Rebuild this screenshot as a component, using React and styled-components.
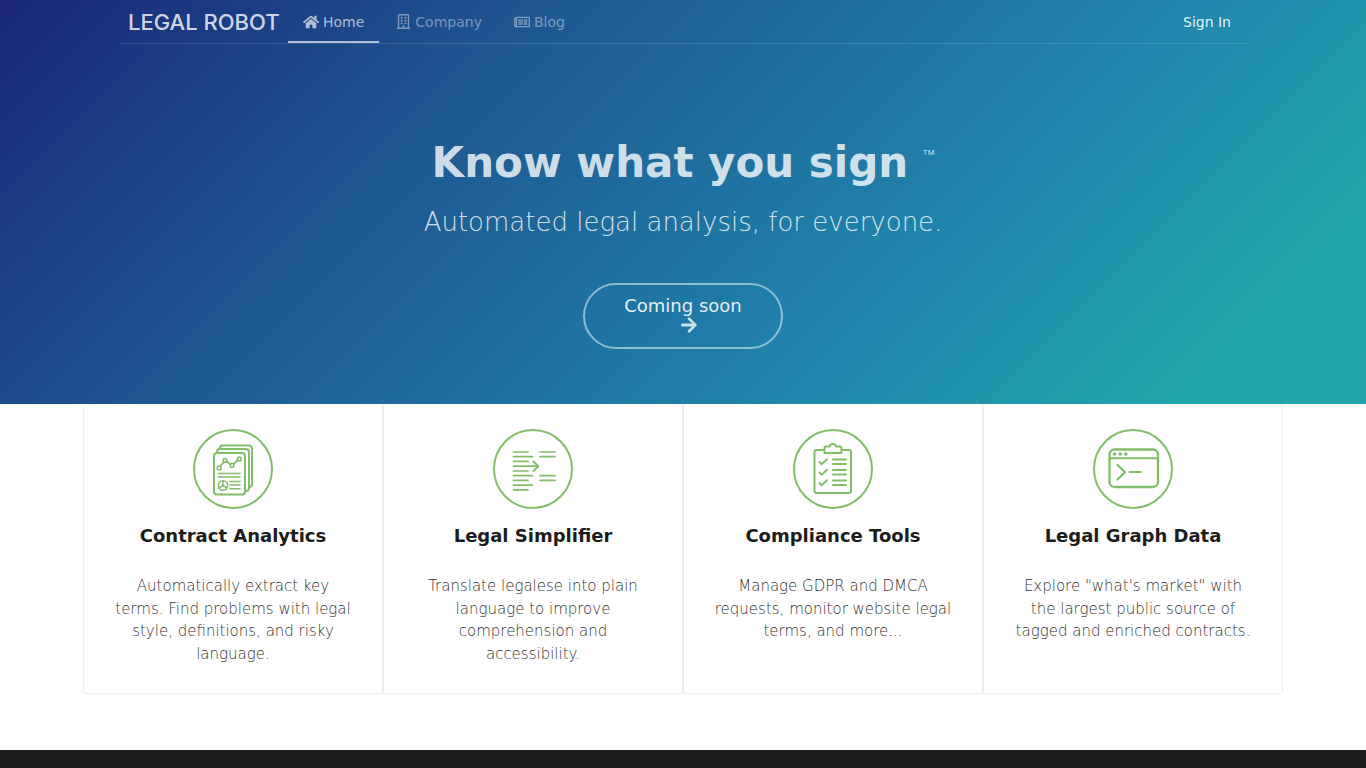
import React from 'react';
import styled, { createGlobalStyle } from 'styled-components';
import { FaHome, FaRegBuilding, FaRegNewspaper, FaArrowRight } from 'react-icons/fa';

const features = [
    {
        title: 'Contract Analytics',
        text: 'Automatically extract key terms. Find problems with legal style, definitions, and risky language.',
        Icon: AnalyticsIcon,
    },
    {
        title: 'Legal Simplifier',
        text: 'Translate legalese into plain language to improve comprehension and accessibility.',
        Icon: SimplifierIcon,
    },
    {
        title: 'Compliance Tools',
        text: 'Manage GDPR and DMCA requests, monitor website legal terms, and more...',
        Icon: ComplianceIcon,
    },
    {
        title: 'Legal Graph Data',
        text: 'Explore "what\'s market" with the largest public source of tagged and enriched contracts.',
        Icon: GraphIcon,
    },
];

export default function App() {
    return (
        <>
            <GlobalStyle />
            <Hero>
                <Navbar>
                    <Logo href="#">LEGAL ROBOT</Logo>
                    <NavLink href="#" $active><FaHome size={16} />Home</NavLink>
                    <NavLink href="#"><FaRegBuilding size={15} />Company</NavLink>
                    <NavLink href="#"><FaRegNewspaper size={16} />Blog</NavLink>
                    <SignIn href="#">Sign In</SignIn>
                </Navbar>
                <Intro>
                    <Title>Know what you sign <Mark>TM</Mark></Title>
                    <Subtitle>Automated legal analysis, for everyone.</Subtitle>
                    <SoonButton type="button">
                        Coming soon
                        <FaArrowRight size={18} />
                    </SoonButton>
                </Intro>
            </Hero>
            <Features>
                {features.map(({ title, text, Icon }) => (
                    <Card key={title}>
                        <Icon />
                        <CardTitle>{title}</CardTitle>
                        <CardText>{text}</CardText>
                    </Card>
                ))}
            </Features>
            <Footer />
        </>
    );
}

function AnalyticsIcon() {
    return (
        <Badge viewBox="0 0 80 80">
            <circle cx="40" cy="40" r="39" />
            <path d="M27 20v-1a2.500 2.500 0 0 1 2.500-2.500H56a3 3 0 0 1 3 3V55a3 3 0 0 1-3 3" />
            <path d="M24 24v-1a3 3 0 0 1 3-3h26a3 3 0 0 1 3 3v36a3 3 0 0 1-3 3" />
            <rect x="21" y="24" width="31" height="41.500" rx="3" />
            <path d="M27.200 37.200l3.800-4.500M33.500 32.300l4 3.200M40.500 35l4.400-4" strokeWidth="1.700" />
            <g strokeWidth="1.500">
                <circle cx="26.200" cy="39" r="1.900" />
                <circle cx="32" cy="31.500" r="1.900" />
                <circle cx="39" cy="36.500" r="1.900" />
                <circle cx="46.300" cy="30" r="1.900" />
            </g>
            <path d="M25.500 44.500H47M25.500 48H47M37 52.500h10M37 56h10M37 59.800h10" strokeWidth="1.600" />
            <circle cx="30" cy="56.500" r="4.700" strokeWidth="1.600" />
            <path d="M30 52v4.500l4 2.300M30 56.500l-4 2.300" strokeWidth="1.500" />
        </Badge>
    );
}

function SimplifierIcon() {
    return (
        <Badge viewBox="0 0 80 80">
            <circle cx="40" cy="40" r="39" />
            <path
                d="M20.500 23h14.500M20.500 27.700h19M20.500 32.400h14.500M20.500 37.200h24.500M20.500 42h14.500M20.500 46.700h19M20.500 51.400h14.500M20.500 56.100h19M20.500 60.800h14.500M47 23h15M47 27.700h15M47 46.700h15M47 51.400h15"
                strokeWidth="1.700"
            />
            <path d="M40.500 32.500l4.800 4.700-4.800 4.800" />
        </Badge>
    );
}

function ComplianceIcon() {
    return (
        <Badge viewBox="0 0 80 80">
            <circle cx="40" cy="40" r="39" />
            <path d="M31 21h-7.500a2 2 0 0 0-2 2v39a2 2 0 0 0 2 2H56a2 2 0 0 0 2-2V23a2 2 0 0 0-2-2h-7.500" />
            <path d="M31.500 24v-5a1.500 1.500 0 0 1 1.500-1.500h3.500c.5-1.700 1.700-2.500 3.300-2.500s2.800.8 3.300 2.500H47a1.500 1.500 0 0 1 1.500 1.500v5z" />
            <path d="M26.500 33l2 2.200 5.500-5M26.500 43.500l2 2.200 5.500-5M26.500 54l2 2.200 5.500-5" strokeWidth="1.900" />
            <path d="M40 30.500H53M40 35H53M40 41H53M40 45.500H53M40 51.500H53M40 56H53" />
        </Badge>
    );
}

function GraphIcon() {
    return (
        <Badge viewBox="0 0 80 80">
            <circle cx="40" cy="40" r="39" />
            <rect x="16.500" y="20.500" width="48.500" height="37.500" rx="5" strokeWidth="2.300" />
            <path d="M17 29.300h48" />
            <path d="M24.500 36l7.500 7.200-7.500 7.300M36.500 43H48" strokeWidth="2.200" />
            <g fill="currentColor" stroke="none">
                <circle cx="21.500" cy="25" r="1.800" />
                <circle cx="27.200" cy="25" r="1.800" />
                <circle cx="32.800" cy="25" r="1.800" />
            </g>
        </Badge>
    );
}

const GlobalStyle = createGlobalStyle`
    * {
        box-sizing: border-box;
    }

    body {
        margin: 0;
        background-color: #ffffff;
        font-family: "DejaVu Sans", sans-serif;
    }
`;

const Hero = styled.header`
    padding: 0 120px;
    background-image: linear-gradient(135deg, #1a2678 0%, #1e5a92 33%, #2086ae 67%, #20a5aa 89%, #21a5ab 100%);
`;

const Navbar = styled.nav`
    display: flex;
    align-items: center;
    height: 44px;
    padding: 0 15px 0 8px;
    border-bottom: 1px solid rgba(255, 255, 255, 0.12);
`;

const Logo = styled.a`
    width: 160px;
    color: rgba(255, 255, 255, 0.8);
    font-family: Inter, sans-serif;
    font-size: 22px;
    font-weight: 500;
    line-height: 24px;
    white-space: nowrap;
    text-decoration: none;
`;

const NavLink = styled.a`
    display: flex;
    align-items: center;
    gap: 4px;
    height: 43px;
    margin-right: 2px;
    padding: 2px 15px 0;
    border-bottom: 2px solid ${({ $active }) => ($active ? 'rgba(255, 255, 255, 0.65)' : 'transparent')};
    color: rgba(255, 255, 255, ${({ $active }) => ($active ? 0.65 : 0.42)});
    font-size: 14px;
    text-decoration: none;
`;

const SignIn = styled.a`
    margin-left: auto;
    color: rgba(255, 255, 255, 0.9);
    font-size: 14px;
    text-decoration: none;
`;

const Intro = styled.section`
    display: flex;
    flex-direction: column;
    align-items: center;
    padding: 93px 0 55px;
    text-align: center;
`;

const Title = styled.h1`
    margin: 0;
    color: rgba(255, 255, 255, 0.8);
    font-size: 42px;
    line-height: 52px;
`;

const Mark = styled.sup`
    font-family: "Liberation Sans", sans-serif;
    font-size: 8px;
    font-weight: 400;
    line-height: 8px;
    vertical-align: 22px;
`;

const Subtitle = styled.h2`
    margin: 16px 0 43px;
    color: rgba(255, 255, 255, 0.8);
    font-size: 26px;
    font-weight: 200;
    line-height: 35px;
`;

const SoonButton = styled.button`
    display: flex;
    flex-direction: column;
    align-items: center;
    width: 200px;
    height: 66px;
    padding: 10px 0 0;
    border: 2px solid rgba(255, 255, 255, 0.5);
    border-radius: 33px;
    background: transparent;
    color: rgba(255, 255, 255, 0.9);
    font-family: inherit;
    font-size: 18px;
    line-height: 21px;
    cursor: pointer;

    svg {
        margin-left: 12px;
        opacity: 0.85;
    }
`;

const Features = styled.main`
    display: grid;
    grid-template-columns: repeat(4, 1fr);
    max-width: 1200px;
    margin: 0 auto 56px;
`;

const Card = styled.article`
    display: flex;
    flex-direction: column;
    align-items: center;
    padding: 25px 30px 28px;
    border: 1px solid #ececec;
    border-top: 0;
    border-radius: 2px;
    text-align: center;
`;

const Badge = styled.svg`
    width: 80px;
    height: 80px;
    color: #82bd69;
    fill: none;
    stroke: currentColor;
    stroke-width: 2;
    stroke-linecap: round;
    stroke-linejoin: round;
`;

const CardTitle = styled.h3`
    margin: 16px 0 28px;
    color: #1c1c1c;
    font-size: 18px;
    line-height: 22px;
`;

const CardText = styled.p`
    margin: 0;
    color: #333333;
    font-size: 15px;
    font-weight: 200;
    line-height: 1.5;
`;

const Footer = styled.footer`
    height: 120px;
    background-color: #1c1d1f;
`;
